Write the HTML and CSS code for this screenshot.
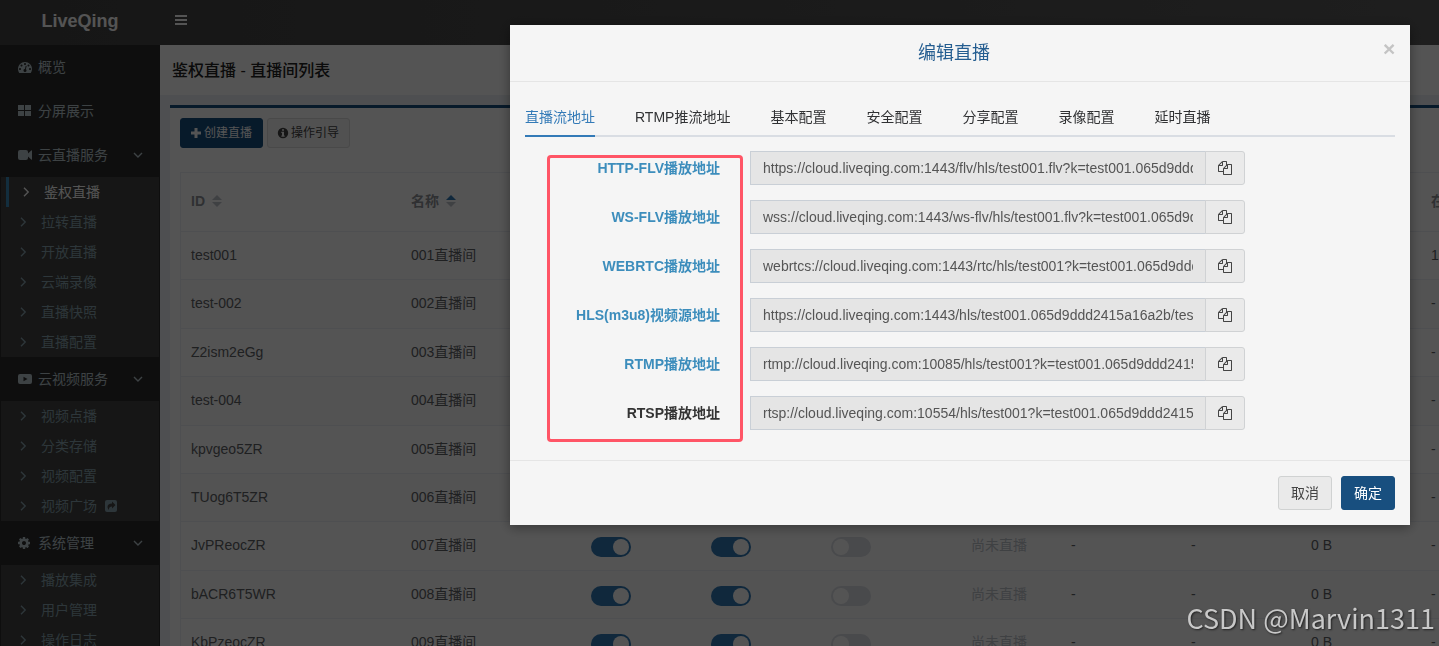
FILE: index.html
```html
<!DOCTYPE html>
<html lang="zh-CN">
<head>
<meta charset="utf-8">
<title>LiveQing</title>
<link rel="stylesheet" href="styles.css">
</head>
<body>
<svg class="sprite" aria-hidden="true">
  <symbol id="copy" viewBox="0 0 1792 1792"><path d="M1696 384q40 0 68 28t28 68v1216q0 40-28 68t-68 28h-960q-40 0-68-28t-28-68v-288h-544q-40 0-68-28t-28-68v-672q0-40 20-88t48-76l408-408q28-28 76-48t88-20h416q40 0 68 28t28 68v328q68-40 128-40h416zm-544 213l-299 299h299v-299zm-640-384l-299 299h299v-299zm196 647l316-316v-416h-384v416q0 40-28 68t-68 28h-416v640h512v-256q0-40 20-88t48-76zm956 804v-1152h-384v416q0 40-28 68t-68 28h-416v640h896z"/></symbol>
  <symbol id="right" viewBox="0 0 14 14"><path d="M5 2.800l4.200 4.200-4.200 4.200" fill="none" stroke="currentColor" stroke-width="1.400"/></symbol>
  <symbol id="down" viewBox="0 0 14 14"><path d="M3 5l4 4 4-4" fill="none" stroke="currentColor" stroke-width="1.400"/></symbol>
</svg>

<div class="app">
  <header class="topbar">
    <a class="logo" href="#">LiveQing</a>
    <button class="menu-toggle" type="button" aria-label="菜单"><svg viewBox="0 0 12 12"><path d="M0 0h12v2H0zM0 4h12v2H0zM0 8h12v2H0z"/></svg></button>
  </header>
  <div class="main">
    <nav class="sidebar">
      <a class="item" href="#"><svg class="icon" viewBox="0 0 1792 1792"><path d="M384 1152q0-53-37.500-90.500t-90.500-37.500-90.500 37.500-37.500 90.500 37.500 90.500 90.500 37.500 90.500-37.500 37.500-90.500zm192-448q0-53-37.500-90.500t-90.500-37.500-90.500 37.500-37.500 90.500 37.500 90.500 90.500 37.500 90.500-37.500 37.500-90.500zm428 481l101-382q6-26-7.500-48.500t-38.500-29.500-48 6.500-30 39.500l-101 382q-60 5-107 43.500t-63 98.500q-20 77 20 146t117 89 146-20 89-117q16-60-6-117t-72-91zm660-33q0-53-37.500-90.500t-90.500-37.500-90.500 37.500-37.500 90.500 37.500 90.500 90.500 37.500 90.500-37.500 37.500-90.500zm-640-640q0-53-37.500-90.500t-90.500-37.500-90.500 37.500-37.500 90.500 37.500 90.500 90.500 37.500 90.500-37.500 37.500-90.500zm448 192q0-53-37.500-90.500t-90.500-37.500-90.500 37.500-37.500 90.500 37.500 90.500 90.500 37.500 90.500-37.500 37.500-90.500zm320 448q0 261-141 483-19 29-54 29h-1402q-35 0-54-29-141-221-141-483 0-182 71-348t191-286 286-191 348-71 348 71 286 191 191 286 71 348z"/></svg><span>概览</span></a>
      <a class="item" href="#"><svg class="icon" viewBox="0 0 14 14"><path d="M0 1h6v5H0zM7 1h6v5H7zM0 7h6v5H0zM7 7h6v5H7z"/></svg><span>分屏展示</span></a>
      <a class="item" href="#"><svg class="icon" viewBox="0 0 14 14"><path d="M2 2h6q2 0 2 2v1.600L13.200 2.400q.8-.4.8.4v8.400q0 .8-.8.400L10 8.400V10q0 2-2 2H2q-2 0-2-2V4q0-2 2-2z"/></svg><span>云直播服务</span><svg class="icon arrow"><use href="#down"/></svg></a>
      <ul class="submenu">
        <li><a class="active" href="#"><svg class="icon"><use href="#right"/></svg><span>鉴权直播</span></a></li>
        <li><a href="#"><svg class="icon"><use href="#right"/></svg><span>拉转直播</span></a></li>
        <li><a href="#"><svg class="icon"><use href="#right"/></svg><span>开放直播</span></a></li>
        <li><a href="#"><svg class="icon"><use href="#right"/></svg><span>云端录像</span></a></li>
        <li><a href="#"><svg class="icon"><use href="#right"/></svg><span>直播快照</span></a></li>
        <li><a href="#"><svg class="icon"><use href="#right"/></svg><span>直播配置</span></a></li>
      </ul>
      <a class="item" href="#"><svg class="icon" viewBox="0 0 14 14"><path fill-rule="evenodd" d="M2 2h10q2 0 2 2v6q0 2-2 2H2q-2 0-2-2V4q0-2 2-2zm3.500 2.800v4.400L9.500 7z"/></svg><span>云视频服务</span><svg class="icon arrow"><use href="#down"/></svg></a>
      <ul class="submenu">
        <li><a href="#"><svg class="icon"><use href="#right"/></svg><span>视频点播</span></a></li>
        <li><a href="#"><svg class="icon"><use href="#right"/></svg><span>分类存储</span></a></li>
        <li><a href="#"><svg class="icon"><use href="#right"/></svg><span>视频配置</span></a></li>
        <li><a href="#"><svg class="icon"><use href="#right"/></svg><span>视频广场</span><svg class="icon share" viewBox="0 0 14 14"><path fill-rule="evenodd" d="M3 1h8q2 0 2 2v8q0 2-2 2H3q-2 0-2-2V3q0-2 2-2zm5 1.500v2Q3.500 4.500 3.500 8q0 1.500 1.500 3Q4.500 7.500 8 7.500v2L11.500 6z"/></svg></a></li>
      </ul>
      <a class="item" href="#"><svg class="icon" viewBox="128 0 1792 1792"><path d="M1152 896q0-106-75-181t-181-75-181 75-75 181 75 181 181 75 181-75 75-181zm512-109v222q0 12-8 23t-20 13l-185 28q-19 54-39 91 35 50 107 138 10 12 10 25t-9 23q-27 37-99 108t-94 71q-12 0-26-9l-138-108q-44 23-91 38-16 136-29 186-7 28-36 28h-222q-14 0-24.500-8.500t-11.500-21.500l-28-184q-49-16-90-37l-141 107q-10 9-25 9-14 0-25-11-126-114-165-168-7-10-7-23 0-12 8-23 15-21 51-66.500t54-70.500q-27-50-41-99l-183-27q-13-2-21-12.500t-8-23.500v-222q0-12 8-23t19-13l186-28q14-46 39-92-40-57-107-138-10-12-10-24 0-10 9-23 26-36 98.500-107.500t94.500-71.500q13 0 26 10l138 107q44-23 91-38 16-136 29-186 7-28 36-28h222q14 0 24.500 8.500t11.500 21.500l28 184q49 16 90 37l142-107q9-9 24-9 13 0 25 10 129 119 165 170 7 8 7 22 0 12-8 23-15 21-51 66.500t-54 70.500q26 50 41 98l183 28q13 2 21 12.500t8 23.500z"/></svg><span>系统管理</span><svg class="icon arrow"><use href="#down"/></svg></a>
      <ul class="submenu">
        <li><a href="#"><svg class="icon"><use href="#right"/></svg><span>播放集成</span></a></li>
        <li><a href="#"><svg class="icon"><use href="#right"/></svg><span>用户管理</span></a></li>
        <li><a href="#"><svg class="icon"><use href="#right"/></svg><span>操作日志</span></a></li>
      </ul>
    </nav>
    <main class="content">
      <h1 class="page-title">鉴权直播 - 直播间列表</h1>
      <section class="box">
        <div class="toolbar">
          <button class="btn btn-sm btn-primary" type="button"><svg viewBox="0 0 12 12"><path d="M4.500 1h3v3.500H11v3H7.500V11h-3V7.500H1v-3h3.500z"/></svg>创建直播</button>
          <button class="btn btn-sm" type="button"><svg viewBox="0 0 12 12"><path fill-rule="evenodd" d="M6 .8a5.200 5.200 0 1 1 0 10.400A5.200 5.200 0 0 1 6 .8zM5 2.300v1.500h2V2.300zM4.300 4.800v1.100H5v2.600h-.7v1.200h3.400V8.500H7V4.800z"/></svg>操作引导</button>
        </div>
        <table class="table">
          <colgroup><col class="w220"><col class="w180"><col class="w120"><col class="w120"><col class="w140"><col class="w100"><col class="w120"><col class="w120"><col class="w120"><col class="w120"></colgroup>
          <thead><tr>
            <th><span class="sort">ID <svg viewBox="0 0 10 12"><path d="M5 0l5 5H0z"/><path d="M5 12l5-5H0z"/></svg></span></th>
            <th><span class="sort">名称 <svg viewBox="0 0 10 12"><path class="on" d="M5 0l5 5H0z"/><path d="M5 12l5-5H0z"/></svg></span></th>
            <th></th><th></th><th></th><th></th><th></th><th></th><th></th><th>在线人数</th>
          </tr></thead>
          <tbody>
            <tr><td>test001</td><td>001直播间</td><td></td><td></td><td></td><td></td><td></td><td></td><td></td><td>1</td></tr>
            <tr><td>test-002</td><td>002直播间</td><td></td><td></td><td></td><td></td><td></td><td></td><td></td><td>-</td></tr>
            <tr><td>Z2ism2eGg</td><td>003直播间</td><td></td><td></td><td></td><td></td><td></td><td></td><td></td><td>-</td></tr>
            <tr><td>test-004</td><td>004直播间</td><td></td><td></td><td></td><td></td><td></td><td></td><td></td><td>-</td></tr>
            <tr><td>kpvgeo5ZR</td><td>005直播间</td><td></td><td></td><td></td><td></td><td></td><td></td><td></td><td>-</td></tr>
            <tr><td>TUog6T5ZR</td><td>006直播间</td><td></td><td></td><td></td><td></td><td></td><td></td><td></td><td>-</td></tr>
            <tr><td>JvPReocZR</td><td>007直播间</td><td><input class="switch" type="checkbox" aria-label="启用" checked></td><td><input class="switch" type="checkbox" aria-label="鉴权" checked></td><td><input class="switch" type="checkbox" aria-label="录像"></td><td class="idle">尚未直播</td><td>-</td><td>-</td><td>0 B</td><td>-</td></tr>
            <tr><td>bACR6T5WR</td><td>008直播间</td><td><input class="switch" type="checkbox" aria-label="启用" checked></td><td><input class="switch" type="checkbox" aria-label="鉴权" checked></td><td><input class="switch" type="checkbox" aria-label="录像"></td><td class="idle">尚未直播</td><td>-</td><td>-</td><td>0 B</td><td>-</td></tr>
            <tr><td>KbPzeocZR</td><td>009直播间</td><td><input class="switch" type="checkbox" aria-label="启用" checked></td><td><input class="switch" type="checkbox" aria-label="鉴权" checked></td><td><input class="switch" type="checkbox" aria-label="录像"></td><td class="idle">尚未直播</td><td>-</td><td>-</td><td>0 B</td><td>-</td></tr>
          </tbody>
        </table>
      </section>
    </main>
  </div>
</div>

<div class="backdrop">
  <div class="modal" role="dialog" aria-labelledby="modal-title">
    <div class="modal-header">
      <h2 id="modal-title">编辑直播</h2>
      <button class="close" type="button" aria-label="关闭">×</button>
    </div>
    <div class="modal-body">
      <div class="tabs" role="tablist">
        <button class="tab current" type="button" role="tab" aria-selected="true">直播流地址</button>
        <button class="tab" type="button" role="tab">RTMP推流地址</button>
        <button class="tab" type="button" role="tab">基本配置</button>
        <button class="tab" type="button" role="tab">安全配置</button>
        <button class="tab" type="button" role="tab">分享配置</button>
        <button class="tab" type="button" role="tab">录像配置</button>
        <button class="tab" type="button" role="tab">延时直播</button>
      </div>
      <form class="form">
        <div class="row"><label class="linked" for="flv">HTTP-FLV播放地址</label><div class="group"><input id="flv" type="text" readonly value="https://cloud.liveqing.com:1443/flv/hls/test001.flv?k=test001.065d9ddd2415a16a2b"><button type="button" aria-label="复制"><svg><use href="#copy"/></svg></button></div></div>
        <div class="row"><label class="linked" for="ws">WS-FLV播放地址</label><div class="group"><input id="ws" type="text" readonly value="wss://cloud.liveqing.com:1443/ws-flv/hls/test001.flv?k=test001.065d9ddd2415a16a2b"><button type="button" aria-label="复制"><svg><use href="#copy"/></svg></button></div></div>
        <div class="row"><label class="linked" for="rtc">WEBRTC播放地址</label><div class="group"><input id="rtc" type="text" readonly value="webrtcs://cloud.liveqing.com:1443/rtc/hls/test001?k=test001.065d9ddd2415a16a2b"><button type="button" aria-label="复制"><svg><use href="#copy"/></svg></button></div></div>
        <div class="row"><label class="linked" for="hls">HLS(m3u8)视频源地址</label><div class="group"><input id="hls" type="text" readonly value="https://cloud.liveqing.com:1443/hls/test001.065d9ddd2415a16a2b/test001.m3u8"><button type="button" aria-label="复制"><svg><use href="#copy"/></svg></button></div></div>
        <div class="row"><label class="linked" for="rtmp">RTMP播放地址</label><div class="group"><input id="rtmp" type="text" readonly value="rtmp://cloud.liveqing.com:10085/hls/test001?k=test001.065d9ddd2415a16a2b"><button type="button" aria-label="复制"><svg><use href="#copy"/></svg></button></div></div>
        <div class="row"><label for="rtsp">RTSP播放地址</label><div class="group"><input id="rtsp" type="text" readonly value="rtsp://cloud.liveqing.com:10554/hls/test001?k=test001.065d9ddd2415a16a2b"><button type="button" aria-label="复制"><svg><use href="#copy"/></svg></button></div></div>
        <div class="highlight"></div>
      </form>
    </div>
    <div class="modal-footer">
      <button class="btn" type="button">取消</button>
      <button class="btn btn-primary" type="button">确定</button>
    </div>
  </div>
</div>
<div class="watermark">CSDN @Marvin1311</div>
</body>
</html>
```

FILE: styles.css
```css
* { box-sizing: border-box; }

body {
  margin: 0;
  height: 100vh;
  overflow: hidden;
  font: 14px/20px "Liberation Sans", "Noto Sans CJK SC", sans-serif;
  color: #333;
}

button, input { font: inherit; color: inherit; }
button { cursor: pointer; }
a { color: inherit; text-decoration: none; }
svg { fill: currentColor; }
.sprite { display: none; }

.app { display: flex; flex-direction: column; height: 100vh; }
.topbar {
  display: flex;
  align-items: center;
  height: 45px;
  flex: none;
  background: linear-gradient(to right, #444, #5c5c5c);
  color: #fff;
}
.logo {
  width: 160px;
  padding-bottom: 4px;
  text-align: center;
  font-size: 18px;
  font-weight: bold;
}
.menu-toggle { border: 0; background: none; padding: 0 15px 5px; height: 20px; display: flex; }
.menu-toggle svg { width: 12px; height: 12px; margin-top: 2px; }

.main { display: flex; flex: 1; min-height: 0; }
.sidebar { width: 160px; flex: none; overflow: hidden; background: #2d2d2d; color: #b8c7ce; }
.icon { width: 14px; height: 14px; flex: none; }
.item { display: flex; align-items: center; gap: 6px; height: 44px; padding: 0 15px 0 18px; }
.arrow { margin-left: auto; }
.submenu { list-style: none; margin: 0 1px; padding: 0 0 0 5px; background: #434343; color: #8aa4af; }
.submenu a { display: flex; align-items: center; gap: 11px; height: 30px; padding-left: 10px; }
.submenu a.active { color: #fff; border-left: 3px solid #3c8dbc; }
.submenu .share { margin-left: -4px; }

.content { flex: 1; min-width: 0; overflow: hidden; background: #ecf0f5; }
.page-title { margin: 0; padding: 16px 12px 14px; background: #fff; font-size: 16px; line-height: 20px; font-weight: 500; color: #222; }
.box { margin: 10px 0 0 10px; padding: 10px; border-top: 3px solid #184f7f; background: #fff; }
.toolbar { display: flex; gap: 4px; margin-bottom: 24px; }

.btn {
  height: 34px;
  padding: 0 12px;
  border: 1px solid #d0d2d2;
  border-radius: 3px;
  background: #eaeaea;
  color: #444;
}
.btn-primary { background: #184f7f; border-color: #184f7f; color: #fff; }
.btn-sm { display: flex; align-items: center; height: 30px; padding: 0 10px 0 9px; font-size: 12px; }
.btn-sm:not(.btn-primary) { background: #f4f4f4; border-color: #ddd; }
.btn-sm svg { width: 12px; height: 12px; margin-right: 2px; }

.table { width: 1360px; table-layout: fixed; border-collapse: separate; border-spacing: 0; border: 1px solid #ebeef5; border-right: 0; color: #606266; }
.table th, .table td { height: 48px; padding: 0 10px 2px; border-bottom: 1px solid #ebeef5; text-align: left; white-space: nowrap; }
.table th { height: 59px; color: #909399; }
.table tbody tr:nth-child(5n + 2) td,
.table tbody tr:nth-child(5n + 4) td { height: 49px; }
.table tbody tr:nth-child(even) td { background: #fafafa; }
.table .idle { color: #c0c4cc; }
.w220 { width: 220px; }
.w180 { width: 180px; }
.w140 { width: 140px; }
.w120 { width: 120px; }
.w100 { width: 100px; }
.sort { display: flex; align-items: center; gap: 7px; }
.sort svg { width: 10px; height: 12px; fill: #c0c4cc; }
.sort .on { fill: #337ab7; }

.switch { appearance: none; display: flex; width: 40px; height: 20px; margin: 4px 0 0; padding: 2px; border-radius: 10px; background: #dcdfe6; }
.switch::before { content: ""; width: 16px; height: 16px; border-radius: 8px; background: #fff; }
.switch:checked { justify-content: flex-end; background: #337ab7; }

.backdrop { position: fixed; inset: 0; padding: 25px 29px; background: rgba(0, 0, 0, .67); }
.modal { width: 900px; max-width: 100%; margin-left: auto; background: #f5f5f5; box-shadow: 0 2px 12px rgba(0, 0, 0, .4); }
.modal-header { display: flex; align-items: center; padding: 15px; border-bottom: 1px solid #e5e5e5; }
.modal-header h2 { flex: 1; margin: 0; padding-left: 10px; text-align: center; font-size: 18px; line-height: 26px; font-weight: normal; color: #245d90; }
.close { width: 22px; height: 26px; padding: 0 0 8px 10px; border: 0; background: none; font-size: 21px; line-height: 18px; font-weight: bold; color: #c4c4c4; }
.modal-body { padding: 15px 15px 30px; }
.tabs { display: flex; gap: 40px; height: 40px; border-bottom: 2px solid #d9dde3; }
.tab { height: 40px; padding: 2px 0 0; border: 0; border-bottom: 2px solid transparent; background: none; color: #303133; white-space: nowrap; }
.tab.current { color: #337ab7; border-color: #337ab7; }

.form { position: relative; display: grid; gap: 15px; margin: 14px -15px 0; }
.row { display: grid; grid-template-columns: 3fr 7fr 2fr; }
.row label { padding: 7px 15px 0; text-align: right; font-weight: bold; white-space: nowrap; }
.linked { color: #3c8dbc; }
.group { display: flex; margin: 0 15px; height: 34px; }
.group input { flex: 1; min-width: 0; padding: 0 12px; border: 1px solid #c9cfd6; border-radius: 0; background: #e5e5e5; color: #555; }
.group button { display: flex; align-items: center; justify-content: center; width: 40px; margin-left: -1px; padding: 0; border: 1px solid #d0d2d4; border-radius: 0 3px 3px 0; background: #eaeaea; color: #444; }
.group svg { width: 14px; height: 14px; }
.highlight { position: absolute; left: 37px; top: 4px; width: 196px; height: 287px; border: 3px solid #ff5566; border-radius: 4px; }

.modal-footer { display: flex; justify-content: flex-end; gap: 9px; padding: 15px; border-top: 1px solid #e5e5e5; }

.watermark {
  position: fixed;
  right: 4px;
  bottom: 8px;
  font: 27px/40px "Noto Sans CJK SC", sans-serif;
  color: #c8c8c8;
  text-shadow: 1px 1px 2px #222;
}
```
